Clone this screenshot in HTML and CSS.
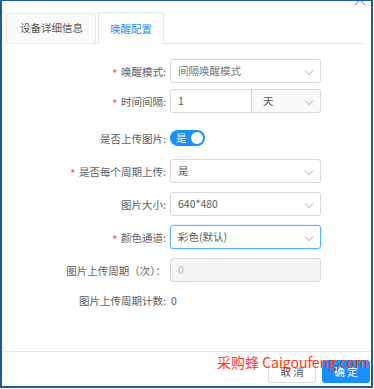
FILE: index.html
```html
<!DOCTYPE html>
<html lang="zh-CN">
<head>
    <meta charset="UTF-8">
    <title>唤醒配置</title>
    <link rel="stylesheet" href="styles.css">
</head>
<body>
    <div class="frame">
        <svg class="close" width="14" height="14" viewBox="0 0 14 14">
            <path d="M2 2 L12 12 M12 2 L2 12" stroke="#aaa" stroke-width="1.2" fill="none"/>
        </svg>

        <div class="tabs">
            <div class="tab">设备详细信息</div>
            <div class="tab active">唤醒配置</div>
        </div>

        <form class="form">
            <div class="row r-tight">
                <label class="label"><i class="req">*</i>唤醒模式:</label>
                <div class="select muted">间隔唤醒模式<span class="arrow"></span></div>
            </div>
            <div class="row r-wide">
                <label class="label"><i class="req">*</i>时间间隔:</label>
                <div class="group">
                    <div class="input">1</div>
                    <div class="select addon">天<span class="arrow"></span></div>
                </div>
            </div>
            <div class="row">
                <label class="label">是否上传图片:</label>
                <div class="switch"><span>是</span><b class="knob"></b></div>
            </div>
            <div class="row">
                <label class="label"><i class="req">*</i>是否每个周期上传:</label>
                <div class="select">是<span class="arrow"></span></div>
            </div>
            <div class="row">
                <label class="label">图片大小:</label>
                <div class="select">640*480<span class="arrow"></span></div>
            </div>
            <div class="row">
                <label class="label"><i class="req">*</i>颜色通道:</label>
                <div class="select focus">彩色(默认)<span class="arrow"></span></div>
            </div>
            <div class="row r-tight">
                <label class="label">图片上传周期（次）：</label>
                <div class="input disabled">0</div>
            </div>
            <div class="row">
                <label class="label">图片上传周期计数:</label>
                <div class="plain">0</div>
            </div>
        </form>

        <div class="footer">
            <button type="button" class="btn">取 消</button>
            <button type="button" class="btn primary">确 定</button>
        </div>

        <div class="watermark">采购蜂 Caigoufeng.com</div>
    </div>
</body>
</html>
```

FILE: styles.css
```css
body {
    margin: 0;
    font-family: "Noto Sans CJK SC", "Noto Sans", sans-serif;
    font-size: 10.5px;
    color: #595959;
    background: #fff;
}
.frame {
    position: relative;
    box-sizing: border-box;
    width: 373px;
    height: 388px;
    border: 2px solid #1b5d93;
    border-top-width: 1px;
    display: flex;
    flex-direction: column;
    overflow: hidden;
}
.close {
    position: absolute;
    top: -8px;
    left: 351px;
}
.tabs {
    display: flex;
    align-items: flex-end;
    gap: 2px;
    margin: 11px 7px 0 4px;
    border-bottom: 1px solid #e8e8e8;
}
.tab {
    box-sizing: border-box;
    height: 30px;
    line-height: 28px;
    padding: 0 12px 0 13px;
    border: 1px solid #e8e8e8;
    border-bottom: none;
    border-radius: 3px 3px 0 0;
    background: #fafafa;
    color: #595959;
}
.tab.active {
    height: 32px;
    line-height: 31px;
    margin-bottom: -1px;
    padding: 0 11px;
    background: #fff;
    color: #1890ff;
}
.form {
    flex: 1;
    padding-top: 15px;
}
.row {
    display: grid;
    grid-template-columns: 168px 151px;
    align-items: center;
    height: 24px;
    margin-bottom: 9px;
}
.row.r-tight {
    margin-bottom: 6px;
}
.row.r-wide {
    margin-bottom: 13px;
}
.label {
    text-align: right;
    padding-right: 4px;
    white-space: nowrap;
    color: #606060;
}
.req {
    font-style: normal;
    color: #f5222d;
    margin-right: 4px;
    font-family: "DejaVu Sans", sans-serif;
    font-size: 9px;
}
.select, .input {
    position: relative;
    box-sizing: border-box;
    height: 24px;
    line-height: 22px;
    padding: 0 7px;
    border: 1px solid #d9d9d9;
    border-radius: 3px;
    background: #fff;
    color: #595959;
}
.select.muted {
    color: #777;
}
.select.focus {
    border-color: #5cb3ff;
    box-shadow: 0 0 0 1px rgba(24, 144, 255, 0.12);
}
.arrow {
    position: absolute;
    right: 8px;
    top: 8px;
    width: 5px;
    height: 5px;
    border-right: 1px solid #c4c4c4;
    border-bottom: 1px solid #c4c4c4;
    transform: rotate(45deg);
}
.group {
    display: flex;
}
.group .input {
    width: 82px;
    border-radius: 3px 0 0 3px;
}
.group .addon {
    flex: 1;
    margin-left: -1px;
    padding-left: 11px;
    border-radius: 0 3px 3px 0;
    background: #fafafa;
}
.input.disabled {
    background: #f5f5f5;
    color: #bbb;
}
.switch {
    box-sizing: border-box;
    width: 35px;
    height: 16px;
    border-radius: 8px;
    background: #1890ff;
    color: #fff;
    display: flex;
    align-items: center;
    justify-content: space-between;
    padding: 0 2px 0 6px;
    line-height: 16px;
}
.knob {
    width: 12px;
    height: 12px;
    border-radius: 50%;
    background: #fff;
}
.plain {
    padding-left: 1px;
}
.footer {
    display: flex;
    justify-content: flex-end;
    gap: 6px;
    border-top: 1px solid #e8e8e8;
    padding: 8px 1px 3px;
}
.btn {
    width: 48px;
    height: 23px;
    padding: 0;
    border: 1px solid #d9d9d9;
    border-radius: 3px;
    background: #fff;
    color: #595959;
    font-family: inherit;
    font-size: 10.5px;
}
.btn.primary {
    background: #1890ff;
    border-color: #1890ff;
    color: #fff;
}
.watermark {
    position: absolute;
    left: 215px;
    top: 351px;
    color: #ff3a12;
    font-size: 14px;
    white-space: nowrap;
}
```
